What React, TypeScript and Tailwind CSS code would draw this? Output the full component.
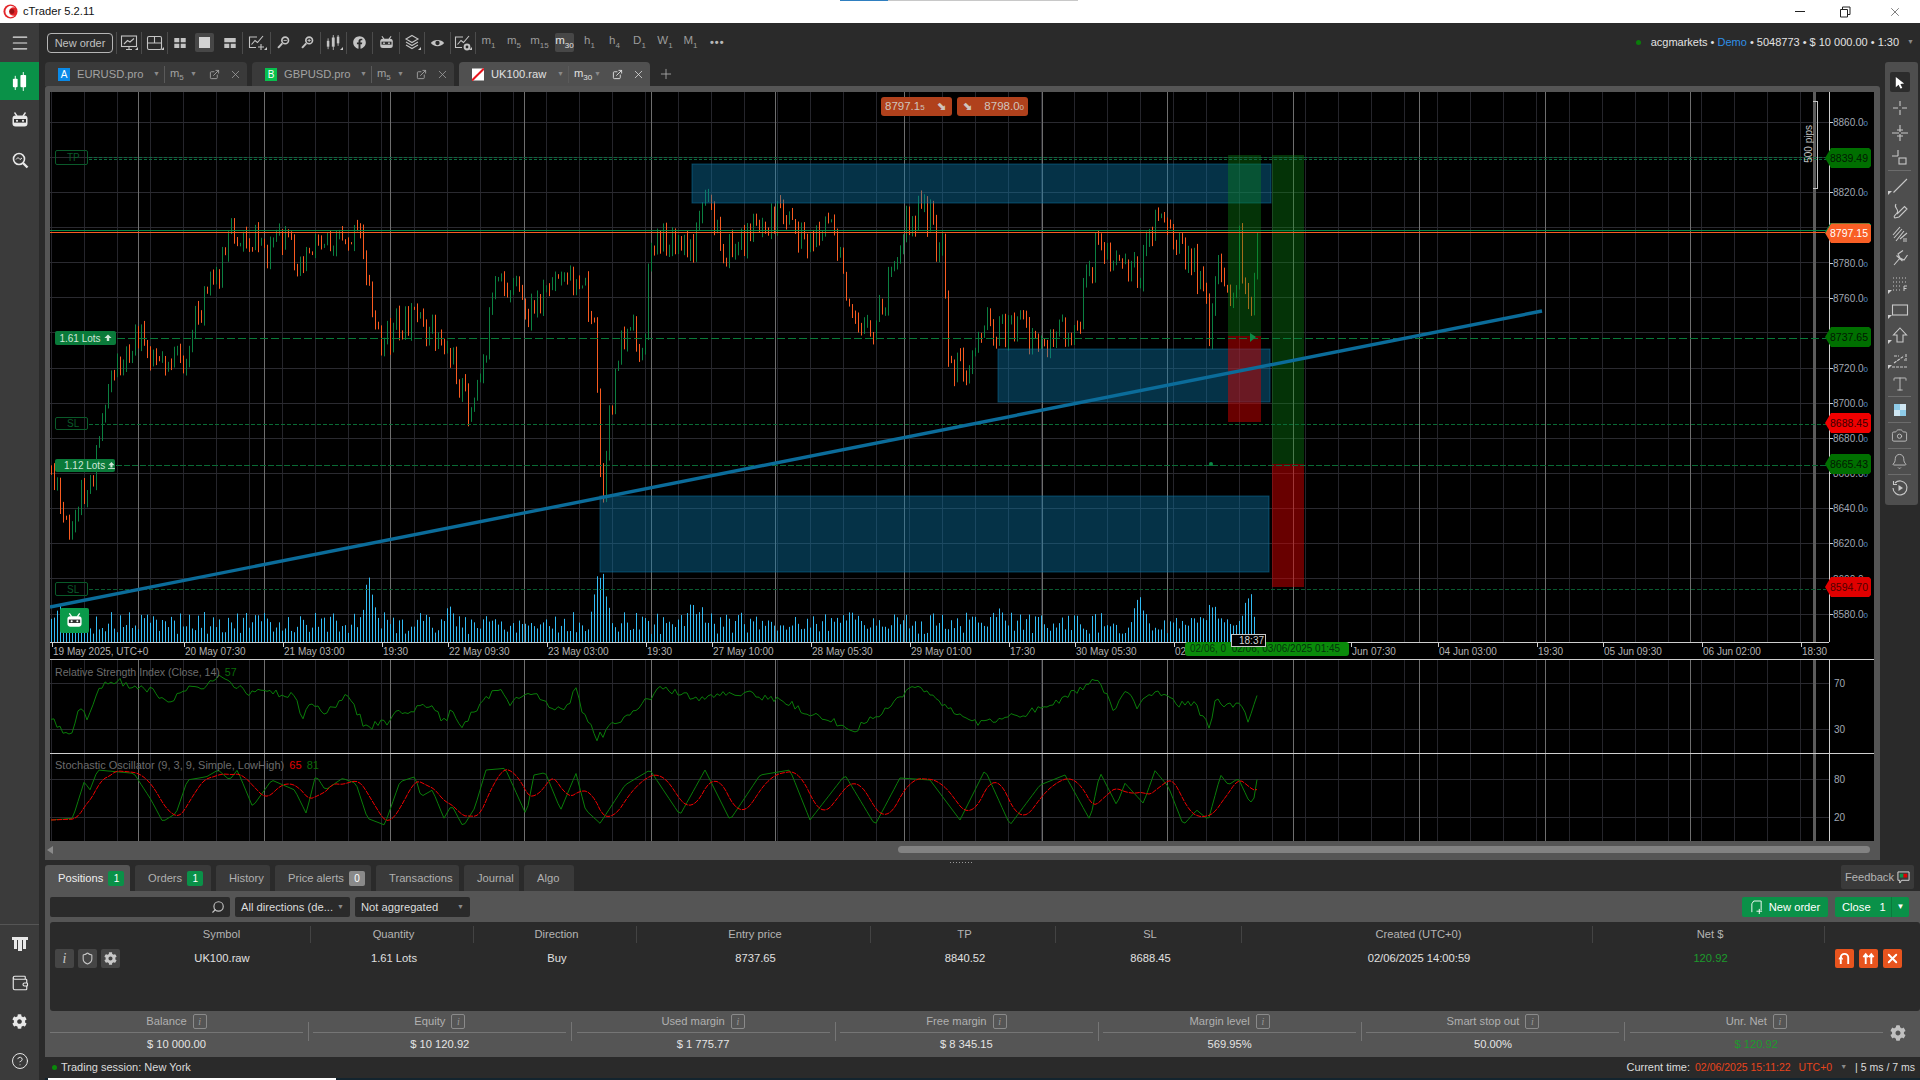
import type { ReactNode } from 'react'
import { Bell, Camera, CircleHelp, ExternalLink, Menu, Plus, Search, Shield, Type, Wallet, X } from 'lucide-react'
import { FaCog, FaFacebook } from 'react-icons/fa'

// ---- Chart data ----

type Pt = [number, number]

function rng(seed: number) {
  let a = seed
  return () => {
    a = (a + 0x6d2b79f5) | 0
    let t = Math.imul(a ^ (a >>> 15), 1 | a)
    t = (t + Math.imul(t ^ (t >>> 7), 61 | t)) ^ t
    return ((t ^ (t >>> 14)) >>> 0) / 4294967296
  }
}

function interp(pts: Pt[], x: number) {
  for (let i = 1; i < pts.length; i++) {
    if (x <= pts[i][0]) {
      const [x0, y0] = pts[i - 1]
      const [x1, y1] = pts[i]
      return y0 + ((y1 - y0) * (x - x0)) / (x1 - x0 || 1)
    }
  }
  return pts[pts.length - 1][1]
}

const K = 1920 / 1568
const z7 = (p: number[][]): Pt[] => p.map(([x, y]) => [x / 2.613, y / 3 + 400])
const z8 = (p: number[][]): Pt[] => p.map(([x, y]) => [1100 + x / 3, 520 + y / 3])
const shot = (p: number[][]): Pt[] => p.map(([x, y]) => [x * K, y * K])

const pricePath = shot([
  [42, 385], [50, 420], [58, 445], [65, 400], [72, 395], [78, 380], [85, 330], [92, 300], [100, 295], [112, 270], [120, 285],
  [135, 290], [148, 300], [160, 260], [175, 230], [190, 190], [200, 195], [215, 200], [230, 200], [245, 210], [260, 195],
  [280, 190], [295, 195], [303, 250], [310, 280], [330, 262], [345, 270], [360, 275], [375, 310], [385, 340], [395, 290],
  [405, 235], [420, 235], [430, 260], [445, 235], [465, 230], [475, 225], [485, 265], [490, 390], [493, 410], [497, 350],
  [505, 280], [515, 270], [525, 290], [532, 190], [550, 205], [565, 205], [575, 160], [590, 205], [605, 200], [620, 178],
  [640, 175], [660, 200], [675, 175], [690, 230], [710, 280], [725, 235], [740, 180], [755, 170], [770, 210], [775, 300],
  [790, 300], [800, 265], [815, 270], [830, 265], [850, 280], [880, 265], [895, 200], [915, 215], [930, 225], [945, 175],
  [960, 200], [975, 215], [988, 270], [995, 200], [1005, 260], [1012, 200], [1022, 270], [1027, 190],
])

function makeBars() {
  const r = rng(11)
  const bars: { x: number; top: number; bottom: number; up: boolean }[] = []
  let prev = interp(pricePath, 51)
  for (let x = 51; x <= 1258; x += 3) {
    const cur = interp(pricePath, x) + (r() - 0.5) * 34
    bars.push({ x, top: Math.min(prev, cur) - r() * 8, bottom: Math.max(prev, cur) + r() * 8, up: cur < prev })
    prev = cur
  }
  return bars
}

const volumePeaks: Pt[] = [[369, 75], [600, 88], [692, 45], [1139, 50], [1212, 47], [1249, 55], [448, 42], [850, 42], [60, 45], [700, 40], [1000, 38]]

function makeVolume() {
  const r = rng(5)
  const out: { x: number; h: number }[] = []
  for (let x = 51; x <= 1256; x += 3) {
    let h = 8 + r() * 22
    for (const [px, ph] of volumePeaks) {
      const d = Math.abs(px - x)
      if (d < 12) h = Math.max(h, ph * (1 - d / 16) * (0.65 + r() * 0.35))
    }
    out.push({ x, h })
  }
  return out
}

const rsiPts: Pt[] = [
  ...z7([
    [133, 952], [150, 985], [190, 1008], [205, 925], [230, 958], [250, 880], [275, 850], [300, 843], [340, 855], [395, 875],
    [450, 905], [490, 860], [530, 860], [580, 820], [640, 880], [690, 870], [770, 890], [790, 955], [810, 895], [850, 935],
    [910, 885], [955, 985], [1020, 960], [1040, 940], [1130, 915], [1160, 965], [1180, 930], [1205, 985], [1275, 885],
    [1320, 875], [1330, 910], [1390, 885], [1475, 935], [1505, 870], [1525, 940], [1560, 1015],
  ]),
  ...shot([
    [510, 585], [540, 562], [570, 570], [600, 565], [640, 572], [665, 585], [700, 595], [730, 575], [745, 560], [770, 575],
    [800, 590], [830, 585], [860, 575], [890, 558],
  ]),
  ...z8([
    [0, 490], [40, 570], [75, 520], [115, 560], [165, 515], [230, 555], [280, 550], [330, 620], [345, 535], [380, 560],
    [420, 540], [445, 605], [472, 530],
  ]),
]

const stochPts: Pt[] = [
  ...z7([
    [133, 1260], [190, 1255], [220, 1145], [235, 1170], [255, 1110], [350, 1120], [395, 1200], [425, 1265], [460, 1240],
    [490, 1140], [540, 1130], [570, 1110], [600, 1140], [620, 1110], [660, 1220], [710, 1140], [770, 1170], [800, 1240],
    [825, 1125], [850, 1170], [895, 1135], [930, 1150], [960, 1255], [1005, 1275], [1045, 1145], [1085, 1130], [1100, 1190],
    [1130, 1170], [1160, 1255], [1180, 1215], [1210, 1280], [1240, 1225], [1270, 1110], [1320, 1105], [1375, 1245],
    [1395, 1125], [1425, 1118], [1465, 1230], [1505, 1120], [1530, 1230], [1568, 1270],
  ]),
  [625, 785], [650, 770], [680, 815], [705, 770], [730, 820], [760, 775], [790, 770], [810, 820], [845, 775], [875, 825],
  [900, 778], [930, 780], [960, 820], [985, 770], [1010, 825], [1040, 785], [1065, 775], [1090, 820],
  ...z8([
    [0, 757], [50, 855], [75, 790], [130, 850], [165, 752], [205, 800], [250, 915], [290, 870], [325, 900], [362, 765],
    [385, 795], [415, 775], [450, 850], [465, 830], [472, 770],
  ]),
]

function sampleRsi() {
  const r = rng(3)
  const out: string[] = []
  for (let x = 51; x <= 1258; x += 3) out.push(`${x},${(interp(rsiPts, x) + (r() - 0.5) * 8).toFixed(1)}`)
  return out.join(' ')
}

function sampleStoch() {
  const g: Pt[] = []
  for (let x = 51; x <= 1258; x += 3) g.push([x, interp(stochPts, x)])
  const red = g.map(([x], i) => {
    const w = g.slice(Math.max(0, i - 7), i + 1)
    return `${x},${(w.reduce((s, p) => s + p[1], 0) / w.length).toFixed(1)}`
  })
  return { green: g.map(([x, y]) => `${x},${y.toFixed(1)}`).join(' '), red: red.join(' ') }
}

const bars = makeBars()
const volume = makeVolume()
const rsiLine = sampleRsi()
const stoch = sampleStoch()

const minorX = Array.from({ length: 54 }, (_, i) => 51 + i * 33)
const majorX = [138, 264, 390, 524, 651, 775, 904, 1042, 1167, 1293, 1419, 1545, 1690]
const mainY = Array.from({ length: 15 }, (_, i) => 121.5 + i * 35.15)

const timeLabels: [number, string][] = [
  [52, '19 May 2025, UTC+0'], [184, '20 May 07:30'], [283, '21 May 03:00'], [382, '19:30'], [448, '22 May 09:30'],
  [547, '23 May 03:00'], [646, '19:30'], [712, '27 May 10:00'], [811, '28 May 05:30'], [910, '29 May 01:00'], [1009, '17:30'],
  [1075, '30 May 05:30'], [1174, '02'], [1351, 'Jun 07:30'], [1438, '04 Jun 03:00'], [1537, '19:30'], [1603, '05 Jun 09:30'],
  [1702, '06 Jun 02:00'], [1801, '18:30'],
]

const priceLabels: [string, number][] = [
  ['8860.0', 122], ['8820.0', 192], ['8780.0', 263], ['8760.0', 298], ['8720.0', 368], ['8700.0', 403], ['8680.0', 438],
  ['8660.0', 473], ['8640.0', 508], ['8620.0', 543], ['8600.0', 579], ['8580.0', 614],
]

const priceTags: { y: number; text: string; fill: string; color: string }[] = [
  { y: 158, text: '8839.49', fill: '#006f00', color: '#021a02' },
  { y: 337, text: '8737.65', fill: '#006f00', color: '#021a02' },
  { y: 423, text: '8688.45', fill: '#f00000', color: '#3a0000' },
  { y: 464, text: '8665.43', fill: '#006f00', color: '#021a02' },
  { y: 587, text: '8594.70', fill: '#e00000', color: '#500000' },
]

// ---- Small icons ----

function Ico({ children, size = 18, className = '' }: { children: ReactNode; size?: number; className?: string }) {
  return (
    <svg viewBox="0 0 18 18" width={size} height={size} fill="none" stroke="currentColor" strokeWidth="1.1" className={className}>
      {children}
    </svg>
  )
}

function Corner() {
  return <span className="absolute right-[3px] bottom-[6px] h-0 w-0 border-b-[3px] border-l-[3px] border-b-[#c8c8c8] border-l-transparent" />
}

function BotIcon({ size = 18 }: { size?: number }) {
  return (
    <svg viewBox="0 0 18 18" width={size} height={size}>
      <path d="M3.5 1.5 L6 5 M14.5 1.5 L12 5" stroke="currentColor" strokeWidth="1.3" />
      <rect x="1.5" y="4.5" width="15" height="11" rx="3" fill="currentColor" />
      <rect x="3" y="8" width="12" height="3.6" fill="#2f2f2f" />
      <circle cx="6" cy="9.8" r="1.1" fill="currentColor" />
      <circle cx="12" cy="9.8" r="1.1" fill="currentColor" />
    </svg>
  )
}

function CandlesIcon() {
  return (
    <svg viewBox="0 0 18 22" width="17" height="21" fill="currentColor">
      <rect x="2" y="8" width="5" height="9" rx="1" />
      <rect x="4" y="5" width="1" height="15" />
      <rect x="10" y="4" width="6" height="13" rx="1" />
      <rect x="12.5" y="1" width="1" height="20" />
    </svg>
  )
}

function ChartPlus({ gear }: { gear?: boolean }) {
  return (
    <Ico>
      <path d="M9 3 H1.5 V13.5 H8" />
      <path d="M3.5 10.5 L7 6.5 L9.5 8.5 L15 2" />
      {gear ? <circle cx="13" cy="13" r="2.4" strokeWidth="2" /> : <path d="M13 10 V16 M10 13 H16" />}
    </Ico>
  )
}

function ArrowUp({ bar }: { bar?: boolean }) {
  return (
    <svg viewBox="0 0 10 10" width="8" height="9" fill="currentColor" className="ml-[3px]">
      <path d="M5 0 L9.5 4.5 H6.5 V8 H3.5 V4.5 H0.5 Z" />
      {bar && <rect y="8.7" width="10" height="1.3" />}
    </svg>
  )
}

function ToolSep() {
  return <span className="h-[22px] w-px shrink-0 bg-[#4b4b4b]" />
}

function ToolCell({ children, w = 'w-[24px]', corner }: { children: ReactNode; w?: string; corner?: boolean }) {
  return (
    <span className={`relative flex h-[26px] shrink-0 items-center justify-center text-[#c4c4c4] ${w}`}>
      {children}
      {corner && <Corner />}
    </span>
  )
}

function Timeframe({ name, sub, active, w = 'w-[25px]' }: { name: string; sub: string; active?: boolean; w?: string }) {
  return (
    <span className={`flex h-[19px] shrink-0 items-start justify-center rounded-[2px] pt-[1px] text-[11.5px] leading-[12px] text-[#9c9c9c] ${w} ${active ? 'bg-[#474747] text-[#e4e4e4]' : ''}`}>
      {name}
      <span className="mt-[7px] text-[8px] leading-[9px]">{sub}</span>
    </span>
  )
}

// ---- Title bar and toolbar ----

function TitleBar() {
  return (
    <div className="flex h-[23px] shrink-0 items-center bg-white text-[11.2px] text-[#111]">
      <svg viewBox="0 0 16 16" width="15" height="15" className="ml-[3px] mr-[5px]">
        <circle cx="8" cy="8" r="7.5" fill="#e3262a" />
        <path d="M13 4 A6 6 0 1 0 13 12 A4.5 4.5 0 1 1 13 4" fill="#fff" />
        <circle cx="9.5" cy="8" r="2.6" fill="#9b1216" />
      </svg>
      <span>cTrader 5.2.11</span>
      <div className="ml-auto flex items-center text-[#222]">
        <span className="mr-[34px] h-px w-[10px] bg-[#222]" />
        <svg viewBox="0 0 12 12" width="12" height="12" fill="none" stroke="#222" className="mr-[37px]">
          <path d="M1.5 3.5 H8.5 V11 H1.5 Z M3.5 3.5 V1 H11 V8.5 H8.5" />
        </svg>
        <X size={14} strokeWidth={1} className="mr-[18px]" />
      </div>
    </div>
  )
}

function Toolbar() {
  return (
    <div className="flex h-[39px] shrink-0 items-center pl-[8px] pr-[6px]">
      <button className="h-[20px] w-[66px] shrink-0 rounded-[4px] border border-[#b5b5b5] text-[11px] leading-[18px] text-[#c0c0c0]">New order</button>
      <span className="w-[3px] shrink-0" />
      <ToolSep />
      <ToolCell corner>
        <Ico>
          <rect x="1.5" y="2" width="15" height="10.5" />
          <path d="M4 10 L7.5 6.5 L10 8 L14 4.5 M6 15.5 H12 M9 12.5 V15.5" />
        </Ico>
      </ToolCell>
      <ToolCell w="w-[1px]"><ToolSep /></ToolCell>
      <ToolCell corner w="w-[25px]">
        <Ico>
          <rect x="1.5" y="2.5" width="14" height="13" rx="1.5" />
          <path d="M8.5 2.5 V9 M1.5 9 H15.5" />
        </Ico>
      </ToolCell>
      <ToolSep />
      <ToolCell w="w-[24px]">
        <svg viewBox="0 0 16 14" width="12" height="10" fill="currentColor">
          <rect width="7" height="6" /><rect x="9" width="7" height="6" /><rect y="8" width="7" height="6" /><rect x="9" y="8" width="7" height="6" />
        </svg>
      </ToolCell>
      <span className="ml-[3px] mr-[3px] flex h-[19px] w-[19px] shrink-0 items-center justify-center rounded-[2px] bg-[#474747]">
        <span className="h-[11px] w-[11px] bg-[#d2d2d2]" />
      </span>
      <ToolCell w="w-[25px]">
        <svg viewBox="0 0 16 14" width="12" height="10" fill="currentColor">
          <rect width="16" height="6" /><rect y="8" width="7" height="6" /><rect x="9" y="8" width="7" height="6" />
        </svg>
      </ToolCell>
      <ToolSep />
      <ToolCell corner w="w-[27px]"><ChartPlus /></ToolCell>
      <ToolSep />
      <ToolCell w="w-[24px]">
        <Ico size={15}>
          <circle cx="11" cy="6.5" r="4" strokeWidth="2" />
          <path d="M7.5 10 L2.5 15.5" strokeWidth="2.4" />
          <path d="M9 6.5 H13" />
        </Ico>
      </ToolCell>
      <ToolCell w="w-[25px]">
        <Ico size={15}>
          <circle cx="11" cy="6.5" r="4" strokeWidth="2" />
          <path d="M7.5 10 L2.5 15.5" strokeWidth="2.4" />
          <path d="M9 6.5 H13 M11 4.5 V8.5" />
        </Ico>
      </ToolCell>
      <ToolSep />
      <ToolCell corner w="w-[25px]">
        <svg viewBox="0 0 18 20" width="15" height="17" fill="currentColor">
          <rect x="1" y="8" width="3" height="7" /><rect x="2" y="5" width="1" height="13" />
          <rect x="7" y="4" width="3.4" height="11" /><rect x="8.2" y="1" width="1" height="18" />
          <rect x="13" y="3" width="3" height="8" /><rect x="14" y="1" width="1" height="13" />
        </svg>
      </ToolCell>
      <ToolSep />
      <ToolCell w="w-[25px]"><FaFacebook size={13} /></ToolCell>
      <ToolSep />
      <ToolCell w="w-[26px]"><BotIcon size={15} /></ToolCell>
      <ToolSep />
      <ToolCell corner w="w-[24px]">
        <Ico>
          <path d="M9 1.5 L15 5 L9 8.5 L3 5 Z" />
          <path d="M3 8 L9 11.5 L15 8 M3 11 L9 14.5 L15 11" />
        </Ico>
      </ToolCell>
      <ToolSep />
      <ToolCell w="w-[25px]">
        <svg viewBox="0 0 18 12" width="15" height="10">
          <path d="M1 6 C4 1 14 1 17 6 C14 11 4 11 1 6 Z" fill="currentColor" />
          <circle cx="9" cy="6" r="2.6" fill="#2a2a2a" />
        </svg>
      </ToolCell>
      <ToolSep />
      <ToolCell corner w="w-[24px]"><ChartPlus gear /></ToolCell>
      <ToolSep />
      <Timeframe name="m" sub="1" />
      <Timeframe name="m" sub="5" w="w-[26px]" />
      <Timeframe name="m" sub="15" />
      <Timeframe name="m" sub="30" active w="w-[19px] mx-[3px]" />
      <Timeframe name="h" sub="1" />
      <Timeframe name="h" sub="4" />
      <Timeframe name="D" sub="1" />
      <Timeframe name="W" sub="1" w="w-[26px]" />
      <Timeframe name="M" sub="1" />
      <span className="ml-[7px] text-[11px] font-bold tracking-[1px] text-[#b8b8b8]">•••</span>
      <div className="ml-auto flex items-center text-[11px] text-[#e2e2e2]">
        <span className="mr-[10px] h-[5px] w-[5px] rounded-full bg-[#0a7d0a]" />
        <span>acgmarkets • <span className="text-[#2f8fe6]">Demo</span> • 5048773 • $ 10 000.00 • 1:30</span>
        <span className="ml-[8px] text-[7px] text-[#8a8a8a]">▼</span>
      </div>
    </div>
  )
}

// ---- Chart tabs ----

function Grip() {
  return <span className="h-[12px] w-[4px] shrink-0 bg-[radial-gradient(#6a6a6a_0.6px,transparent_0.7px)] bg-[length:2px_2px]" />
}

function ChartTab({ badge, name, nameW, tf, sub, active, className }: { badge: ReactNode; name: string; nameW: string; tf: string; sub: string; active?: boolean; className: string }) {
  const tone = active ? 'text-[#e0e0e0]' : 'text-[#a2a2a2]'
  return (
    <div className={`flex h-[24px] shrink-0 items-center rounded-t-[4px] pl-[6px] text-[11.2px] ${active ? 'bg-[#505050]' : 'bg-[#3a3a3a]'} ${tone} ${className}`}>
      <Grip />
      <span className="ml-[3px] mr-[7px] shrink-0">{badge}</span>
      <span className={`whitespace-nowrap ${nameW}`}>{name}</span>
      <span className="ml-[9px] text-[7px] text-[#8a8a8a]">▼</span>
      <span className="ml-[4px] mr-[5px] h-[17px] w-px bg-[#5a5a5a]" />
      <span className="flex w-[18px] items-start leading-[12px]">
        {tf}
        <span className="mt-[6px] text-[8px] leading-[9px]">{sub}</span>
      </span>
      <span className="ml-[2px] text-[7px] text-[#8a8a8a]">▼</span>
      <ExternalLink size={11} className="ml-auto" />
      <X size={13} strokeWidth={1.4} className="ml-[9px] mr-[5px]" />
    </div>
  )
}

function ChartTabs() {
  return (
    <div className="flex h-[24px] shrink-0 items-center gap-[5px] pl-[5px]">
      <ChartTab
        className="w-[202px]"
        name="EURUSD.pro"
        nameW="w-[67px]"
        tf="m"
        sub="5"
        badge={<span className="flex h-[13px] w-[12px] items-center justify-center bg-[#0a8ae8] text-[10px] text-white">A</span>}
      />
      <ChartTab
        className="w-[202px]"
        name="GBPUSD.pro"
        nameW="w-[67px]"
        tf="m"
        sub="5"
        badge={<span className="flex h-[13px] w-[12px] items-center justify-center bg-[#08c04e] text-[10px] text-white">B</span>}
      />
      <ChartTab
        active
        className="w-[191px]"
        name="UK100.raw"
        nameW="w-[57px]"
        tf="m"
        sub="30"
        badge={
          <svg viewBox="0 0 12 12" width="12" height="13" className="block">
            <rect width="12" height="12" fill="#fff" />
            <path d="M0 12 L12 0" stroke="#e8141c" strokeWidth="2" />
          </svg>
        }
      />
      <Plus size={16} strokeWidth={1.2} className="ml-[3px] text-[#b4b4b4]" />
    </div>
  )
}

// ---- Chart panes ----

function Grid({ top, bottom, rows }: { top: number; bottom: number; rows: number[] }) {
  return (
    <g>
      {minorX.map(x => <line key={x} x1={x + 0.5} x2={x + 0.5} y1={top} y2={bottom} stroke="#25252b" />)}
      {rows.map(y => <line key={y} x1={50} x2={1829} y1={Math.round(y) + 0.5} y2={Math.round(y) + 0.5} stroke="#2a2a30" />)}
      {majorX.map(x => <line key={x} x1={x + 0.5} x2={x + 0.5} y1={top} y2={bottom} stroke="#6e6e6e" />)}
      <rect x={1813} y={top} width={3} height={bottom - top} fill="#5c5c5c" />
    </g>
  )
}

function MainPane() {
  return (
    <div className="relative h-[567px] shrink-0 overflow-hidden">
      <svg viewBox="50 92 1824 567" width="1824" height="567" className="block">
        <Grid top={92} bottom={642} rows={mainY} />
        {volume.map(v => <line key={v.x} x1={v.x + 0.5} x2={v.x + 0.5} y1={642} y2={642 - v.h} stroke="#33bbf4" />)}
        {bars.map(b => <line key={b.x} x1={b.x + 0.5} x2={b.x + 0.5} y1={b.top} y2={b.bottom} stroke={b.up ? '#0b7f40' : '#f95b20'} />)}

        {/* zones and position bands */}
        <rect x={692} y={164} width={579} height={39} fill="#0b78aa" fillOpacity={0.42} stroke="#0b78aa" strokeOpacity={0.5} />
        <rect x={998} y={349} width={272} height={53} fill="#0b78aa" fillOpacity={0.42} stroke="#0b78aa" strokeOpacity={0.5} />
        <rect x={600} y={496} width={669} height={76} fill="#0b78aa" fillOpacity={0.42} stroke="#0b78aa" strokeOpacity={0.5} />
        <rect x={1228} y={155} width={33} height={181} fill="#0a8c14" fillOpacity={0.36} />
        <rect x={1228} y={336} width={33} height={86} fill="#d00000" fillOpacity={0.5} />
        <rect x={1272} y={155} width={32} height={309} fill="#0a8c14" fillOpacity={0.36} />
        <rect x={1272} y={464} width={32} height={123} fill="#d00000" fillOpacity={0.5} />

        {/* order and price lines */}
        <line x1={89} x2={1826} y1={157.5} y2={157.5} stroke="#0d6b40" strokeDasharray="3 2" />
        <line x1={89} x2={1826} y1={159.5} y2={159.5} stroke="#0d6b40" strokeDasharray="3 2" />
        <line x1={50} x2={1826} y1={230.5} y2={230.5} stroke="#0a8a45" />
        <line x1={50} x2={1826} y1={232.5} y2={232.5} stroke="#f95b20" />
        <line x1={117} x2={1826} y1={338.5} y2={338.5} stroke="#0a7a3a" strokeDasharray="8 3" />
        <line x1={89} x2={1826} y1={424.5} y2={424.5} stroke="#0a6a35" strokeDasharray="4 2" />
        <line x1={116} x2={1826} y1={465.5} y2={465.5} stroke="#0a6a35" strokeDasharray="6 2" />
        <line x1={89} x2={1826} y1={589.5} y2={589.5} stroke="#0a5a30" strokeDasharray="4 2" />
        <circle cx={1211} cy={464} r={2} fill="#0a8a45" />
        <path d="M1250 333 L1256 337 L1250 342 Z" fill="#0c8a45" />

        <line x1={50} x2={1542} y1={607} y2={311} stroke="#0b6c9a" strokeWidth={3.4} />

        {/* axes */}
        <line x1={1829.5} x2={1829.5} y1={92} y2={642} stroke="#cfcfcf" />
        <line x1={50} x2={1829} y1={642.5} y2={642.5} stroke="#cfcfcf" />
        {timeLabels.map(([x]) => <line key={x} x1={x + 0.5} x2={x + 0.5} y1={642} y2={647} stroke="#cfcfcf" />)}
        {priceLabels.map(([p, y]) => <line key={p} x1={1829} x2={1833} y1={y + 0.5} y2={y + 0.5} stroke="#cfcfcf" />)}
      </svg>

      {timeLabels.map(([x, t]) => (
        <span key={t + x} className="absolute top-[553px] whitespace-nowrap text-[10px] leading-[14px] text-[#b4b4b4]" style={{ left: x - 50 + 1 }}>{t}</span>
      ))}
      {priceLabels.map(([p, y]) => (
        <span key={p} className="absolute left-[1783px] whitespace-nowrap text-[10px] leading-[14px] text-[#a0a8b4]" style={{ top: y - 92 - 6 }}>
          {p}<span className="text-[8px] text-[#4c8fd0]">0</span>
        </span>
      ))}

      {/* bid / ask boxes */}
      <div className="absolute left-[831px] top-[5px] flex gap-[5px] text-[11.5px] text-[#cfc4bd]">
        <span className="flex h-[19px] w-[71px] items-center justify-between rounded-[3px] bg-[#b0411c] pl-[4px] pr-[6px]">
          <span>8797.1<span className="text-[8px]">5</span></span><span className="text-[11px] font-bold">⬊</span>
        </span>
        <span className="flex h-[19px] w-[71px] items-center justify-between rounded-[3px] bg-[#b0411c] pl-[6px] pr-[4px]">
          <span className="text-[11px] font-bold">⬊</span><span>8798.0<span className="text-[8px]">0</span></span>
        </span>
      </div>

      {/* 500 pips ruler */}
      <div className="absolute left-[1763px] top-[9px] h-[88px] w-[5px] border border-l-0 border-[#c4c4c4]" />
      <span className="absolute left-[1752px] top-[33px] rotate-180 whitespace-nowrap text-[10px] leading-[14px] text-[#c4c4c4] [writing-mode:vertical-rl]">500 pips</span>

      {/* left order labels */}
      <div className="absolute left-[5px] top-[58px] flex h-[15px] w-[33px] items-center rounded-[2px] border border-[#0a5a2a] pl-[3px] text-[10px] text-[#0a5a2a]"><Grip /><span className="ml-[4px]">TP</span></div>
      <div className="absolute left-[5px] top-[239px] flex h-[14px] w-[61px] items-center justify-center whitespace-nowrap rounded-[2px] bg-[#0a7a3a] text-[10px] text-[#cfe6d8]">1.61 Lots<ArrowUp /></div>
      <div className="absolute left-[5px] top-[325px] flex h-[13px] w-[33px] items-center rounded-[2px] border border-[#0a5a2a] pl-[3px] text-[10px] text-[#0a5a2a]"><Grip /><span className="ml-[4px]">SL</span></div>
      <div className="absolute left-[5px] top-[367px] flex h-[13px] w-[60px] items-center whitespace-nowrap rounded-[2px] bg-[#0a7a3a] pl-[3px] text-[10px] text-[#cfe6d8]"><Grip /><span className="ml-[2px]">1.12 Lots</span><ArrowUp bar /></div>
      <div className="absolute left-[5px] top-[490px] flex h-[14px] w-[33px] items-center rounded-[2px] border border-[#0a5a2a] pl-[3px] text-[10px] text-[#0a5a2a]"><Grip /><span className="ml-[4px]">SL</span></div>
      <div className="absolute left-[10px] top-[516px] flex h-[25px] w-[29px] items-center justify-center rounded-[2px] bg-[#0a9a4a] text-white"><BotIcon size={17} /></div>

      {/* price tags */}
      {priceTags.map(t => (
        <div key={t.text} className="absolute left-[1775px] flex h-[20px] w-[46px] items-center justify-end pr-[3px] text-[10.5px] leading-[14px]" style={{ top: t.y - 92 - 10, color: t.color }}>
          <svg viewBox="0 0 46 20" width="46" height="20" className="absolute inset-0">
            <polygon points="0,10 6,0 44,0 46,2 46,18 44,20 6,20" fill={t.fill} />
          </svg>
          <span className="relative">{t.text}</span>
        </div>
      ))}
      <div className="absolute left-[1775px] top-[131px] flex h-[20px] w-[46px] items-center justify-end pr-[3px] text-[10.5px] leading-[14px] text-white">
        <svg viewBox="0 0 46 20" width="46" height="20" className="absolute inset-0">
          <polygon points="0,10 6,0 44,0 46,2 46,18 44,20 6,20" fill="#f95f25" />
          <path d="M0 10 L6 0 H44 L46 2" stroke="#0a8a45" fill="none" />
        </svg>
        <span className="relative">8797.15</span>
      </div>

      {/* crosshair time tags */}
      <div className="absolute left-[1135px] top-[550px] h-[14px] w-[164px] whitespace-nowrap rounded-[3px] bg-[#0a8a0a] pl-[5px] text-[10px] leading-[14px] text-[#04330a]">02/06, 0&nbsp; 02/06, 03/06/2025 01:45</div>
      <div className="absolute left-[1181px] top-[542px] flex h-[13px] w-[35px] items-center border border-[#c8c8c8] bg-black pl-[1px] text-[10px] leading-[12px] text-[#d0d0d0]"><Grip /><span className="ml-[2px]">18:37</span></div>
    </div>
  )
}

function RsiPane() {
  return (
    <div className="relative h-[94px] shrink-0 overflow-hidden border-t border-[#cfcfcf]">
      <svg viewBox="50 660 1824 93" width="1824" height="93" className="block">
        <Grid top={660} bottom={753} rows={[683, 729]} />
        <polyline points={rsiLine} fill="none" stroke="#0a7d0a" />
        <line x1={1829.5} x2={1829.5} y1={660} y2={753} stroke="#cfcfcf" />
      </svg>
      <span className="absolute left-[5px] top-[5px] text-[10.6px] leading-[14px] text-[#6c6c6c]">Relative Strength Index (Close, 14) <span className="ml-[2px] text-[#0a6d0a]">57</span></span>
      <span className="absolute left-[1784px] top-[17px] text-[10px] leading-[14px] text-[#a0a8b4]">70</span>
      <span className="absolute left-[1784px] top-[63px] text-[10px] leading-[14px] text-[#a0a8b4]">30</span>
    </div>
  )
}

function StochPane() {
  return (
    <div className="relative h-[88px] shrink-0 overflow-hidden border-t border-[#cfcfcf]">
      <svg viewBox="50 754 1824 87" width="1824" height="87" className="block">
        <Grid top={754} bottom={841} rows={[779, 817]} />
        <polyline points={stoch.green} fill="none" stroke="#0a7d0a" />
        <polyline points={stoch.red} fill="none" stroke="#f00000" strokeDasharray="5 1" />
        <line x1={1829.5} x2={1829.5} y1={754} y2={841} stroke="#cfcfcf" />
      </svg>
      <span className="absolute left-[5px] top-[4px] text-[11px] leading-[14px] text-[#6c6c6c]">Stochastic Oscillator (9, 3, 9, Simple, LowHigh) <span className="ml-[2px] text-[#e00000]">65</span> <span className="ml-[2px] text-[#0a6d0a]">81</span></span>
      <span className="absolute left-[1784px] top-[19px] text-[10px] leading-[14px] text-[#a0a8b4]">80</span>
      <span className="absolute left-[1784px] top-[57px] text-[10px] leading-[14px] text-[#a0a8b4]">20</span>
    </div>
  )
}

function ChartPanel() {
  return (
    <div className="flex h-[774px] shrink-0 flex-col rounded-t-[3px] bg-[#555] pl-[5px] pr-[6px] pt-[6px]">
      <div className="flex h-[749px] flex-col bg-black">
        <MainPane />
        <RsiPane />
        <StochPane />
      </div>
      <div className="flex h-[19px] items-start pt-[5px]">
        <span className="ml-[-3px] h-0 w-0 border-y-[4px] border-r-[6px] border-y-transparent border-r-[#8a8a8a]" />
        <span className="ml-[845px] h-[7px] w-[972px] rounded-full bg-[#828282]" />
      </div>
    </div>
  )
}

// ---- Right drawing toolbar ----

function RailItem({ children, y, corner }: { children: ReactNode; y: string; corner?: boolean }) {
  return (
    <div className={`relative flex w-full shrink-0 items-center justify-center text-[#c8c8c8] ${y}`}>
      {children}
      {corner && <span className="absolute left-[3px] bottom-[3px] h-0 w-0 border-t-[4px] border-r-[4px] border-t-[#d0d0d0] border-r-transparent" />}
    </div>
  )
}

function RailSep() {
  return <span className="ml-[3px] block h-px w-[23px] shrink-0 bg-[#6c6c6c]" />
}

function DrawingRail() {
  return (
    <div className="ml-[5px] flex h-[443px] w-[33px] shrink-0 flex-col rounded-[3px] bg-[#4e4e4e] pr-[4px]">
      <span className="mx-auto mt-[5px] h-[3px] w-[16px] shrink-0 bg-[radial-gradient(#a0a0a0_0.6px,transparent_0.7px)] bg-[length:2px_2px]" />
      <div className="mx-auto mt-[2px] flex h-[20px] w-[20px] shrink-0 items-center justify-center rounded-[2px] bg-[#2c2c2c] text-white">
        <svg viewBox="0 0 14 14" width="13" height="13" fill="currentColor"><path d="M3 1 L12 8 L8 8.5 L10 13 L8 13.5 L6 9.5 L3 12 Z" /></svg>
      </div>
      <RailItem y="h-[25px] mt-[3px]"><Ico><path d="M9 2 V7 M9 11 V16 M2 9 H7 M11 9 H16" /></Ico></RailItem>
      <RailItem y="h-[25px]"><Ico><path d="M9 1 V8 M9 10 V17 M1 9 H8 M10 9 H17 M6 6 H12 M6 12 H12" /></Ico></RailItem>
      <RailItem y="h-[25px]"><Ico><path d="M7 1 V7 M1 7 H7" /><rect x="8" y="9" width="7" height="6" /></Ico></RailItem>
      <RailSep />
      <RailItem y="h-[25px] mt-[2px]" corner><Ico><path d="M2.5 15.5 L16 2" /></Ico></RailItem>
      <RailItem y="h-[25px]"><Ico><path d="M5 2 C2 6 9 7 6 11 C4 14 2 14 4 16 L8 15 L16 7 L13.5 4.5 L6 12" /></Ico></RailItem>
      <RailItem y="h-[22px]"><Ico><path d="M2 10 L9 2 M3 13 L11 4 M5 16 L13 6 M9 14 L16 8 M12 14 H16 M12 16 H16" /></Ico></RailItem>
      <RailItem y="h-[25px]"><Ico><path d="M3 16 L9 9 M9 9 L7 5 L12 1.5 M9 9 L13 11 L16.5 6 M5.5 6.5 L11.5 12" /></Ico></RailItem>
      <RailItem y="h-[27px]" corner>
        <svg viewBox="0 0 18 18" width="18" height="18" className="text-[#c8c8c8]">
          <path d="M2 3 H16 M2 7 H16 M2 11 H11 M2 15 H9" stroke="currentColor" strokeDasharray="1 2" />
          <path d="M13 11 V16 M13 11 H16 M13 13.5 H15.5" stroke="currentColor" fill="none" />
        </svg>
      </RailItem>
      <RailItem y="h-[25px]" corner><Ico><rect x="1.5" y="4" width="15" height="10" /></Ico></RailItem>
      <RailItem y="h-[25px]" corner><Ico><path d="M9 2 L15.5 9 H12 V16 H6 V9 H2.5 Z" /></Ico></RailItem>
      <RailItem y="h-[25px]" corner><Ico><path d="M1 16 H17 M3 12 L13 5 M3 5 H8 M13 9 H17 M15 3 V8" strokeDasharray="3 1" /></Ico></RailItem>
      <RailItem y="h-[24px]"><Type size={18} strokeWidth={1.2} /></RailItem>
      <RailSep />
      <RailItem y="h-[25px]">
        <svg viewBox="0 0 12 12" width="12" height="12"><rect width="12" height="12" fill="#cfe6f2" /><rect width="6" height="6" fill="#8ecbe8" /><rect x="6" y="6" width="6" height="6" fill="#8ecbe8" /></svg>
      </RailItem>
      <RailSep />
      <RailItem y="h-[25px]"><Camera size={17} strokeWidth={1.2} /></RailItem>
      <RailSep />
      <RailItem y="h-[25px]"><Bell size={17} strokeWidth={1.2} /></RailItem>
      <RailSep />
      <RailItem y="h-[25px]">
        <Ico><path d="M4 4 A7 7 0 1 1 2 9" /><path d="M2.5 2 V5.5 H6" /><path d="M7.5 6 L12 9 L7.5 12 Z" fill="currentColor" stroke="none" /></Ico>
      </RailItem>
    </div>
  )
}

// ---- Bottom panel ----

function BottomTab({ label, badge, badgeTone, active, w }: { label: string; badge?: string; badgeTone?: string; active?: boolean; w: string }) {
  return (
    <div className={`flex h-[26px] shrink-0 items-center rounded-t-[3px] pl-[5px] text-[11.2px] ${active ? 'bg-[#555] text-[#eee]' : 'bg-[#3a3a3a] text-[#b0b0b0]'} ${w}`}>
      <Grip />
      <span className="ml-[4px] whitespace-nowrap">{label}</span>
      {badge && <span className={`ml-[5px] flex h-[15px] w-[16px] items-center justify-center rounded-[2px] text-[10px] text-white ${badgeTone}`}>{badge}</span>}
    </div>
  )
}

function SmallBtn({ children, tone }: { children: ReactNode; tone: string }) {
  return <span className={`flex h-[19px] w-[19px] items-center justify-center rounded-[2px] ${tone}`}>{children}</span>
}

const columns = [
  { label: 'Symbol', value: 'UK100.raw' },
  { label: 'Quantity', value: '1.61 Lots' },
  { label: 'Direction', value: 'Buy' },
  { label: 'Entry price', value: '8737.65' },
  { label: 'TP', value: '8840.52' },
  { label: 'SL', value: '8688.45' },
  { label: 'Created (UTC+0)', value: '02/06/2025 14:00:59' },
  { label: 'Net $', value: '120.92' },
]

const summary: [string, string][] = [
  ['Balance', '$ 10 000.00'], ['Equity', '$ 10 120.92'], ['Used margin', '$ 1 775.77'], ['Free margin', '$ 8 345.15'],
  ['Margin level', '569.95%'], ['Smart stop out', '50.00%'], ['Unr. Net', '$ 120.92'],
]

function InfoBadge() {
  return <span className="ml-[6px] flex h-[15px] w-[14px] items-center justify-center rounded-[2px] border border-[#8a8a8a] font-['Liberation_Serif',serif] text-[10px] italic text-[#9a9a9a]">i</span>
}

function PositionsTable() {
  return (
    <div className="mt-[5px] h-[89px] shrink-0 rounded-[3px] bg-[#2a2a2a] text-[11.2px]">
      <div className="grid h-[24px] grid-cols-[80px_181px_163px_163px_234px_185px_186px_351px_232px_1fr] items-center text-[#b4b4b4]">
        <span />
        {columns.map(c => (
          <span key={c.label} className="flex h-[17px] items-center justify-center border-r border-[#434343] pl-[3px]">{c.label}</span>
        ))}
        <span />
      </div>
      <div className="grid h-[24px] grid-cols-[80px_181px_163px_163px_234px_185px_186px_351px_232px_1fr] items-center text-[#e0e0e0]">
        <span className="flex gap-[4px] pl-[5px]">
          <SmallBtn tone="bg-[#454545] text-[#c8c8c8]"><span className="font-['Liberation_Serif',serif] text-[14px] italic">i</span></SmallBtn>
          <SmallBtn tone="bg-[#454545] text-[#c8c8c8]"><Shield size={13} strokeWidth={2} /></SmallBtn>
          <SmallBtn tone="bg-[#454545] text-[#c8c8c8]"><FaCog size={13} /></SmallBtn>
        </span>
        {columns.map(c => (
          <span key={c.label} className={`pl-[3px] text-center ${c.label === 'Net $' ? 'text-[#1c9a2c]' : ''}`}>{c.value}</span>
        ))}
        <span className="flex gap-[5px] pl-[10px] text-white">
          <SmallBtn tone="bg-[#e8541e]">
            <svg viewBox="0 0 14 14" width="13" height="13" fill="none" stroke="currentColor" strokeWidth="2"><path d="M3 13 V6 A4 4 0 0 1 11 6 V13" /><path d="M1 8 L3 5 L5 8" strokeWidth="1.2" /></svg>
          </SmallBtn>
          <SmallBtn tone="bg-[#e8541e]">
            <svg viewBox="0 0 14 14" width="13" height="13" fill="none" stroke="currentColor" strokeWidth="2"><path d="M4 13 V3 M10 13 V3 M1.5 5.5 L4 2.5 L6.5 5.5 M7.5 5.5 L10 2.5 L12.5 5.5" /></svg>
          </SmallBtn>
          <SmallBtn tone="bg-[#e8541e]"><X size={15} strokeWidth={3} /></SmallBtn>
        </span>
      </div>
    </div>
  )
}

function SummaryRow() {
  return (
    <div className="flex h-[46px] shrink-0 items-start text-[11.2px]">
      {summary.map(([label, value], i) => (
        <div key={label} className={`relative flex w-[253px] shrink-0 flex-col items-center ${i > 0 ? 'ml-[10.3px]' : ''}`}>
          <span className="flex h-[22px] w-full items-center justify-center border-b border-[#757575] text-[#b0b0b0]">{label}<InfoBadge /></span>
          <span className={`mt-[4px] leading-[14px] ${label === 'Unr. Net' ? 'text-[#1c9a2c]' : 'text-[#e4e4e4]'}`}>{value}</span>
          {i < 6 && <span className="absolute right-[-6px] top-[11px] h-[19px] w-px bg-[#757575]" />}
        </div>
      ))}
      <FaCog size={16} className="ml-[7px] mt-[14px] shrink-0 text-[#c0c0c0]" />
    </div>
  )
}

function BottomPanel() {
  return (
    <div className="flex min-h-0 min-w-0 flex-1 flex-col">
      <div className="flex h-[5px] shrink-0 items-center pl-[904px]">
        <span className="h-[3px] w-[24px] bg-[radial-gradient(#999_0.8px,transparent_0.9px)] bg-[length:3px_3px]" />
      </div>
      <div className="flex h-[26px] shrink-0 gap-[5px] pr-[6px]">
        <BottomTab active w="w-[85px]" label="Positions" badge="1" badgeTone="bg-[#0a9148]" />
        <BottomTab w="w-[76px]" label="Orders" badge="1" badgeTone="bg-[#0a9148]" />
        <BottomTab w="w-[54px]" label="History" />
        <BottomTab w="w-[96px]" label="Price alerts" badge="0" badgeTone="bg-[#8a8a8a]" />
        <BottomTab w="w-[83px]" label="Transactions" />
        <BottomTab w="w-[55px]" label="Journal" />
        <BottomTab w="w-[50px]" label="Algo" />
        <div className="ml-auto flex h-[24px] w-[73px] items-center justify-center gap-[3px] rounded-[2px] bg-[#3a3a3a] text-[11.2px] text-[#b4b4b4]">
          Feedback
          <svg viewBox="0 0 14 14" width="13" height="13"><path d="M1 1 H13 V10 H5 L3 13 V10 H1 Z" fill="none" stroke="#ddd" /><rect x="3" y="3" width="4" height="4" fill="#0a9148" /><rect x="7" y="3" width="4" height="4" fill="#e00000" /></svg>
        </div>
      </div>
      <div className="flex h-[166px] shrink-0 flex-col bg-[#555] pl-[5px] pt-[6px]">
        <div className="flex h-[20px] shrink-0 items-center text-[11.2px] text-[#dcdcdc]">
          <div className="flex h-[20px] w-[180px] items-center justify-end rounded-[2px] bg-[#2a2a2a] pr-[5px]"><Search size={14} className="-scale-x-100 text-[#c0c0c0]" /></div>
          <div className="ml-[5px] flex h-[20px] w-[115px] items-center justify-between whitespace-nowrap rounded-[2px] bg-[#2a2a2a] px-[6px]">All directions (de...<span className="text-[7px] text-[#8a8a8a]">▼</span></div>
          <div className="ml-[5px] flex h-[20px] w-[115px] items-center justify-between whitespace-nowrap rounded-[2px] bg-[#2a2a2a] px-[6px]">Not aggregated<span className="text-[7px] text-[#8a8a8a]">▼</span></div>
          <div className="ml-auto flex h-[20px] w-[86px] items-center justify-center gap-[6px] rounded-[2px] bg-[#0a9148] text-white">
            <svg viewBox="0 0 14 16" width="13" height="15" fill="none" stroke="currentColor"><path d="M4 1 H12 V11 M2 13 V4 L4 1" /><path d="M7 12 H13 M10 9.5 V15" /></svg>
            New order
          </div>
          <div className="ml-[7px] mr-[11px] flex h-[20px] w-[74px] items-center rounded-[2px] bg-[#0a9148] pl-[7px] text-white">
            Close<span className="ml-[9px]">1</span>
            <span className="ml-auto flex h-full w-[18px] items-center justify-center border-l border-[#0a7a3c] text-[8px]">▼</span>
          </div>
        </div>
        <PositionsTable />
        <SummaryRow />
      </div>
      <div className="flex h-[21px] shrink-0 items-center pl-[7px] pr-[5px] text-[11px] text-[#dcdcdc]">
        <span className="h-[5px] w-[5px] rounded-full bg-[#0a8a0a]" />
        <span className="ml-[4px]">Trading session: New York</span>
        <span className="ml-auto">Current time:</span>
        <span className="ml-[5px] text-[10.5px] text-[#e8441c]">02/06/2025 15:11:22</span>
        <span className="ml-[8px] text-[10.5px] text-[#e8441c]">UTC+0</span>
        <span className="ml-[8px] text-[7px] text-[#8a8a8a]">▼</span>
        <span className="ml-[8px] text-[10.5px]">| 5 ms / 7 ms</span>
      </div>
      <div className="h-[2px] shrink-0 bg-[#13242e] pl-[3px]">
        <div className="h-[2px] w-[288px] bg-white" />
      </div>
    </div>
  )
}

// ---- Left rail ----

function Sidebar() {
  return (
    <div className="flex w-[39px] shrink-0 flex-col bg-[#3b3b3b] text-[#e8e8e8]">
      <div className="flex h-[39px] items-center justify-center"><Menu size={20} strokeWidth={1.4} /></div>
      <div className="flex h-[38px] items-center justify-center bg-[#0a9148] text-white"><CandlesIcon /></div>
      <div className="flex h-[40px] items-center justify-center"><BotIcon /></div>
      <div className="flex h-[40px] items-center justify-center">
        <svg viewBox="0 0 18 18" width="18" height="18" fill="none" stroke="currentColor" strokeWidth="1.6">
          <circle cx="8" cy="8" r="5.5" /><path d="M12 12 L16.5 16.5" strokeWidth="2.4" /><path d="M5 8.5 L7 6.5 L9 8.5 L11 7" strokeWidth="1" />
        </svg>
      </div>
      <div className="flex-1" />
      <div className="flex h-[39px] items-center justify-center border-t border-[#555]">
        <svg viewBox="0 0 18 18" width="18" height="18" fill="currentColor"><rect x="1" y="2" width="16" height="3" /><rect x="3" y="5" width="3" height="9" /><rect x="12" y="5" width="3" height="9" /><rect x="7" y="5" width="4" height="11" /></svg>
      </div>
      <div className="flex h-[39px] items-center justify-center"><Wallet size={18} strokeWidth={1.5} /></div>
      <div className="flex h-[39px] items-center justify-center"><FaCog size={15} /></div>
      <div className="flex h-[39px] items-center justify-center"><CircleHelp size={18} strokeWidth={1.3} /></div>
    </div>
  )
}

export default function App() {
  return (
    <div className="relative flex h-[1080px] w-[1920px] flex-col overflow-hidden bg-[#2a2a2a] font-['Liberation_Sans',Arial,sans-serif]">
      <div className="absolute left-[840px] top-0 flex h-px">
        <span className="w-[48px] bg-[#2f7fc0]" />
        <span className="w-[190px] bg-[#c8c8c8]" />
      </div>
      <TitleBar />
      <div className="flex min-h-0 flex-1">
        <Sidebar />
        <div className="flex min-w-0 flex-1 flex-col">
          <Toolbar />
          <div className="flex h-[798px] shrink-0 pl-[1px]">
            <div className="flex w-[1840px] shrink-0 flex-col">
              <ChartTabs />
              <div className="pl-[5px]"><ChartPanel /></div>
            </div>
            <DrawingRail />
          </div>
          <div className="flex min-h-0 flex-1 pl-[6px]">
            <BottomPanel />
          </div>
        </div>
      </div>
    </div>
  )
}
